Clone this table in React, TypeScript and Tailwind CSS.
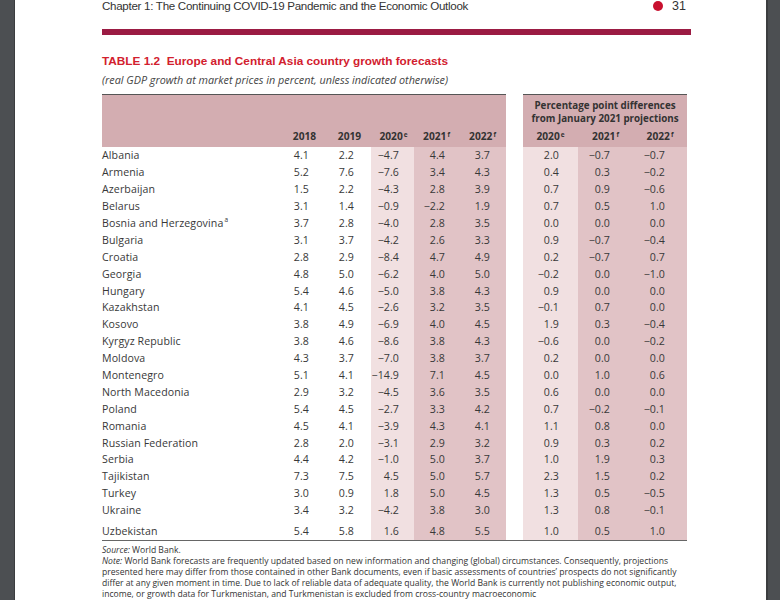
import React from "react";

type Row = [string, string[], string[], string?];

const rows: Row[] = [
  ["Albania", ["4.1", "2.2", "−4.7", "4.4", "3.7"], ["2.0", "−0.7", "−0.7"]],
  ["Armenia", ["5.2", "7.6", "−7.6", "3.4", "4.3"], ["0.4", "0.3", "−0.2"]],
  ["Azerbaijan", ["1.5", "2.2", "−4.3", "2.8", "3.9"], ["0.7", "0.9", "−0.6"]],
  ["Belarus", ["3.1", "1.4", "−0.9", "−2.2", "1.9"], ["0.7", "0.5", "1.0"]],
  ["Bosnia and Herzegovina", ["3.7", "2.8", "−4.0", "2.8", "3.5"], ["0.0", "0.0", "0.0"], "a"],
  ["Bulgaria", ["3.1", "3.7", "−4.2", "2.6", "3.3"], ["0.9", "−0.7", "−0.4"]],
  ["Croatia", ["2.8", "2.9", "−8.4", "4.7", "4.9"], ["0.2", "−0.7", "0.7"]],
  ["Georgia", ["4.8", "5.0", "−6.2", "4.0", "5.0"], ["−0.2", "0.0", "−1.0"]],
  ["Hungary", ["5.4", "4.6", "−5.0", "3.8", "4.3"], ["0.9", "0.0", "0.0"]],
  ["Kazakhstan", ["4.1", "4.5", "−2.6", "3.2", "3.5"], ["−0.1", "0.7", "0.0"]],
  ["Kosovo", ["3.8", "4.9", "−6.9", "4.0", "4.5"], ["1.9", "0.3", "−0.4"]],
  ["Kyrgyz Republic", ["3.8", "4.6", "−8.6", "3.8", "4.3"], ["−0.6", "0.0", "−0.2"]],
  ["Moldova", ["4.3", "3.7", "−7.0", "3.8", "3.7"], ["0.2", "0.0", "0.0"]],
  ["Montenegro", ["5.1", "4.1", "−14.9", "7.1", "4.5"], ["0.0", "1.0", "0.6"]],
  ["North Macedonia", ["2.9", "3.2", "−4.5", "3.6", "3.5"], ["0.6", "0.0", "0.0"]],
  ["Poland", ["5.4", "4.5", "−2.7", "3.3", "4.2"], ["0.7", "−0.2", "−0.1"]],
  ["Romania", ["4.5", "4.1", "−3.9", "4.3", "4.1"], ["1.1", "0.8", "0.0"]],
  ["Russian Federation", ["2.8", "2.0", "−3.1", "2.9", "3.2"], ["0.9", "0.3", "0.2"]],
  ["Serbia", ["4.4", "4.2", "−1.0", "5.0", "3.7"], ["1.0", "1.9", "0.3"]],
  ["Tajikistan", ["7.3", "7.5", "4.5", "5.0", "5.7"], ["2.3", "1.5", "0.2"]],
  ["Turkey", ["3.0", "0.9", "1.8", "5.0", "4.5"], ["1.3", "0.5", "−0.5"]],
  ["Ukraine", ["3.4", "3.2", "−4.2", "3.8", "3.0"], ["1.3", "0.8", "−0.1"]],
  ["Uzbekistan", ["5.4", "5.8", "1.6", "4.8", "5.5"], ["1.0", "0.5", "1.0"]],
];

const body = { fontFamily: '"Open Sans", "Noto Sans", sans-serif' };

function DataRow({ r, last }: { r: Row; last: boolean }) {
  const [name, a, b, sup] = r;
  const pt = last ? "pt-[4px]" : "";
  return (
    <div
      className={`flex text-[10.6px] tracking-[0.1px] text-[#383838] leading-[12px] ${
        last ? "h-[21px]" : "h-[16.9px]"
      }`}
    >
      <div className={`w-[179px] flex items-center ${pt}`}>
        {name}
        {sup && <sup className="text-[6.5px] ml-[1px]">{sup}</sup>}
      </div>
      <div className={`w-[43px] pr-[15px] flex items-center justify-end ${pt}`}>{a[0]}</div>
      <div className={`w-[47px] pr-[17px] flex items-center justify-end ${pt}`}>{a[1]}</div>
      <div className={`w-[43px] bg-[#f1e0e1] pr-[15px] flex items-center justify-end ${pt}`}>{a[2]}</div>
      <div className={`w-[45px] bg-[#e1c3c6] pr-[14px] flex items-center justify-end ${pt}`}>{a[3]}</div>
      <div className={`w-[47px] bg-[#e1c3c6] pr-[16px] flex items-center justify-end ${pt}`}>{a[4]}</div>
      <div className="w-[17px] bg-white" />
      <div className={`w-[55px] bg-[#f1e0e1] pr-[19px] flex items-center justify-end ${pt}`}>{b[0]}</div>
      <div className={`w-[55px] bg-[#e1c3c6] pr-[23px] flex items-center justify-end ${pt}`}>{b[1]}</div>
      <div className={`w-[54px] bg-[#e1c3c6] pr-[22px] flex items-center justify-end ${pt}`}>{b[2]}</div>
    </div>
  );
}

function Yr({ y, s }: { y: string; s: string }) {
  return (
    <span>
      {y}
      <sup className="text-[6.5px] ml-[1px]">{s}</sup>
    </span>
  );
}

export default function App() {
  return (
    <div className="w-[780px] h-[600px] overflow-hidden bg-[#4c4f52] flex" style={body}>
      <div className="w-[15px] shrink-0 bg-[#4c4f52] border-r border-[#3b3d3f]" />
      <div className="w-[751px] shrink-0 bg-white h-[600px] overflow-hidden pl-[87px] pr-[75px]">
        {/* running header */}
        <div className="flex items-center justify-between h-[12px] text-[#333]">
          <span
            className="text-[11.6px] leading-[12px] tracking-[-0.3px]"
            style={{ fontFamily: '"Liberation Sans", sans-serif' }}
          >
            Chapter 1: The Continuing COVID-19 Pandemic and the Economic Outlook
          </span>
          <span className="flex items-center gap-[9px] pr-[5px]">
            <span className="w-[10px] h-[10px] rounded-full bg-[#c8102e]" />
            <span className="text-[12.5px] leading-[12px]" style={{ fontFamily: '"Liberation Sans", sans-serif' }}>
              31
            </span>
          </span>
        </div>
        <div className="mt-[17px] h-[6px] bg-[#9b1b43]" />

        {/* title */}
        <div
          className="mt-[19px] text-[11.8px] leading-[14px] font-bold text-[#d2202e]"
          style={{ fontFamily: '"Liberation Sans", sans-serif' }}
        >
          TABLE 1.2&nbsp;&nbsp;Europe and Central Asia country growth forecasts
        </div>
        <div className="mt-[5px] text-[10.8px] leading-[13px] italic text-[#444]">
          (real GDP growth at market prices in percent, unless indicated otherwise)
        </div>

        {/* table */}
        <div className="mt-[8px] w-[585px]">
          {/* header */}
          <div className="flex h-[53px] text-[10.2px] font-bold text-[#333] leading-[12px]">
            <div className="w-[404px] border-t border-[#555] bg-[#d3adb1] flex items-end pb-[5px]">
              <div className="w-[179px]" />
              <div className="w-[43px] text-center pl-[4px]">2018</div>
              <div className="w-[47px] text-center pl-[4px]">2019</div>
              <div className="w-[43px] text-center pl-[2px]"><Yr y="2020" s="e" /></div>
              <div className="w-[45px] text-center"><Yr y="2021" s="f" /></div>
              <div className="w-[47px] text-center"><Yr y="2022" s="f" /></div>
            </div>
            <div className="w-[17px]" />
            <div className="w-[164px] border-t border-[#555] bg-[#d3adb1] flex flex-col">
              <div className="pt-[4px] text-center leading-[13px] text-[9.8px]">
                Percentage point differences
                <br />
                from January 2021 projections
              </div>
              <div className="flex mt-[5px]">
                <div className="w-[55px] text-center"><Yr y="2020" s="e" /></div>
                <div className="w-[55px] text-center"><Yr y="2021" s="f" /></div>
                <div className="w-[54px] text-center"><Yr y="2022" s="f" /></div>
              </div>
            </div>
          </div>
          {/* rows */}
          <div className="border-b-[1.5px] border-[#666]">
            {rows.map((r, i) => (
              <DataRow key={r[0]} r={r} last={i === rows.length - 1} />
            ))}
          </div>
        </div>

        {/* notes */}
        <div className="mt-[4px] text-[8.6px] leading-[11px] text-[#333] whitespace-nowrap">
          <div>
            <i>Source:</i> World Bank.
          </div>
          <div>
            <i>Note:</i> World Bank forecasts are frequently updated based on new information and changing (global) circumstances. Consequently, projections
          </div>
          <div>
            presented here may differ from those contained in other Bank documents, even if basic assessments of countries’ prospects do not significantly
          </div>
          <div>
            differ at any given moment in time. Due to lack of reliable data of adequate quality, the World Bank is currently not publishing economic output,
          </div>
          <div>income, or growth data for Turkmenistan, and Turkmenistan is excluded from cross-country macroeconomic</div>
        </div>
      </div>
      <div className="w-[14px] shrink-0 bg-[#4c4f52] border-l-2 border-[#3b3d3f]" />
    </div>
  );
}
